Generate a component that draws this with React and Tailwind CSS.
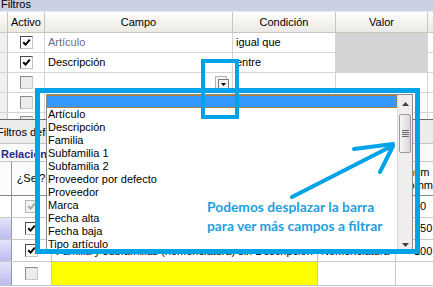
import React from "react";

const Tick = ({ color = "#000" }) => (
  <svg width="9" height="9" viewBox="0 0 9 9">
    <path d="M1.2 4.2 L3.6 6.6 L7.8 1.6" fill="none" stroke={color} strokeWidth="2" />
  </svg>
);

function CB({ state }) {
  if (state === "on")
    return (
      <div className="w-[13px] h-[13px] border border-t-[#4a4a4a] border-l-[#4a4a4a] border-r-[#c4c4c4] border-b-[#c4c4c4] bg-white flex items-center justify-center">
        <Tick />
      </div>
    );
  if (state === "dis")
    return (
      <div className="w-[13px] h-[13px] border border-[#b4b4b4] bg-[#f1f1f1] flex items-center justify-center">
        <Tick color="#a8a8a8" />
      </div>
    );
  return <div className="w-[13px] h-[13px] border border-t-[#8a8a8a] border-l-[#8a8a8a] border-r-[#c8c8c8] border-b-[#c8c8c8] bg-[#ececec]" />;
}

function URow({ cb, campo, cond, gray, extra, h = "h-[20px]" }) {
  return (
    <div className={`flex ${h} border-b border-[#d6d6d6] overflow-hidden`}>
      <div className="w-[8px] border-r border-[#c9c6bd] bg-[#f0f0f0]" />
      <div className="w-[37px] border-r border-[#d6d6d6] flex items-center justify-center">{cb}</div>
      <div className="w-[188px] border-r border-[#d6d6d6] pl-[3px] flex items-center">
        <div className="flex-1 whitespace-nowrap">{campo}</div>
        {extra}
      </div>
      <div className="w-[103px] border-r border-[#d6d6d6] pl-[3px] flex items-center whitespace-nowrap">{cond}</div>
      <div className={`w-[92px] border-r border-[#d6d6d6] ${gray ? "bg-[#d4d4d4]" : "bg-white"}`} />
      <div className="flex-1" />
    </div>
  );
}

function LRow({ cb, lav, desc, yellow, nom, val, low, h = "h-[22px]" }) {
  return (
    <div className={`flex ${h} border-b border-[#c8c8c8]`}>
      <div className={`w-[12px] border-r border-[#9a9a9a] ${lav ? "bg-gradient-to-b from-[#e4e4fa] to-[#bcbcee]" : "bg-white"}`} />
      <div className="w-[40px] border-r border-[#c8c8c8] flex items-center justify-center">{cb}</div>
      <div className={`w-[266px] border-r border-[#c8c8c8] pl-[4px] flex whitespace-nowrap overflow-hidden ${low ? "items-end pb-[2px]" : "items-center"} ${yellow ? "bg-[#ffff00]" : "bg-white"}`}>{desc}</div>
      <div className={`w-[78px] border-r border-[#c8c8c8] pl-[3px] flex whitespace-nowrap ${low ? "items-end pb-[2px]" : "items-center"}`}>{nom}</div>
      <div className={`flex-1 pl-[18px] flex whitespace-nowrap ${low ? "items-end pb-[2px]" : "items-center"}`}>{val}</div>
    </div>
  );
}

const items = [
  "Artículo",
  "Descripción",
  "Familia",
  "Subfamilia 1",
  "Subfamilia 2",
  "Proveedor por defecto",
  "Proveedor",
  "Marca",
  "Fecha alta",
  "Fecha baja",
  "Tipo artículo",
];

export default function App() {
  return (
    <div className="relative w-[433px] h-[287px] overflow-hidden bg-white text-[11px] text-black font-['Liberation_Sans',Arial,sans-serif]">
      {/* title bar */}
      <div className="h-[12px] overflow-hidden bg-[#c8d0e1] border-b border-[#e6eaf2]">
        <div className="-mt-[3px] leading-[14px] pl-[1px]">Filtros</div>
      </div>

      {/* upper header */}
      <div className="flex h-[21px] bg-gradient-to-b from-[#fdfdfc] to-[#ebe9e4] border-b border-[#c9c6bd] leading-[20px]">
        <div className="w-[8px] border-r border-[#c9c6bd]" />
        <div className="w-[37px] border-r border-[#c9c6bd] text-center">Activo</div>
        <div className="w-[188px] border-r border-[#c9c6bd] text-center">Campo</div>
        <div className="w-[103px] border-r border-[#c9c6bd] text-center">Condición</div>
        <div className="w-[92px] border-r border-[#c9c6bd] text-center">Valor</div>
        <div className="flex-1" />
      </div>

      <URow cb={<CB state="on" />} campo={<span className="text-[#6d6d8f]">Artículo</span>} cond="igual que" gray />
      <URow cb={<CB state="on" />} campo="Descripción" cond="entre" gray />
      <URow
        cb={<CB state="off" />}
        campo=""
        cond=""
        extra={
          <div className="relative w-[14px] h-[15px] mr-[3px] mt-[1px]">
            <div className="absolute left-0 top-0 w-[12px] h-[13px] border border-[#b4b4b4] bg-[#f4f4f4]" />
            <div className="absolute left-[3px] top-[3px] w-[11px] h-[12px] border border-[#7c7c7c] bg-[#f2f2f2] flex items-center justify-center">
              <svg width="5" height="3" viewBox="0 0 5 3">
                <path d="M0 0 H5 L2.5 3 Z" fill="#000" />
              </svg>
            </div>
          </div>
        }
      />
      <URow cb={<CB state="off" />} campo="" cond="" />
      <div className="flex h-[6px] overflow-hidden">
        <div className="w-[8px] border-r border-[#c9c6bd] bg-[#f0f0f0]" />
        <div className="w-[37px] border-r border-[#d6d6d6] flex justify-center pt-[3px]">
          <CB state="off" />
        </div>
        <div className="w-[188px] border-r border-[#d6d6d6]" />
        <div className="w-[103px] border-r border-[#d6d6d6]" />
        <div className="w-[92px] border-r border-[#d6d6d6]" />
      </div>

      {/* lower panel */}
      <div className="h-[1px] bg-[#6a6a6a]" />
      <div className="h-[24px] bg-[#ececec] border-b border-[#c4c4c4] leading-[24px] -ml-[3px] whitespace-nowrap">Filtros definidos</div>
      <div className="h-[18px] bg-[#fafafa] border-b border-[#c4c4c4] font-bold text-[#1c2a8c] leading-[20px] pl-[1px] whitespace-nowrap">Relaciones</div>

      {/* lower header */}
      <div className="flex h-[34px] bg-[#fbfbfb] border-b border-[#7f8f8f]">
        <div className="w-[12px] border-r border-[#9a9a9a]" />
        <div className="w-[40px] border-r border-[#c8c8c8] pl-[5px] flex items-center whitespace-nowrap">¿Sel?</div>
        <div className="w-[266px] border-r border-[#c8c8c8]" />
        <div className="w-[78px] border-r border-[#c8c8c8]" />
        <div className="flex-1 pl-[18px] flex flex-col justify-center leading-[13px] whitespace-nowrap">
          <span>Enum</span>
          <span>Comm</span>
        </div>
      </div>
      <LRow cb={<CB state="dis" />} desc="Artículos" nom="Artículo" val="10" />
      <LRow cb={<CB state="on" />} lav desc="Familias" nom="Familia" val="150" />
      <LRow cb={<CB state="on" />} lav low desc="Familia y subfamilias (nomenclatura) sin Descripción" nom="Nomenclatura" val="100" />
      <LRow cb={<CB state="off" />} lav yellow desc="" nom="" val="" h="h-[24px]" />

      {/* dropdown list overlay */}
      <div className="absolute left-[46px] top-[94px] w-[367px] h-[160px] border border-[#8c8c8c] bg-white flex overflow-hidden">
        <div className="flex-1 flex flex-col">
          <div className="h-[13px] bg-[#3399ff] border border-dotted border-[#b8733a]" />
          {items.map((t) => (
            <div key={t} className="h-[13px] leading-[13px] pl-[1px] whitespace-nowrap">
              {t}
            </div>
          ))}
        </div>
        <div className="w-[15px] bg-[#eeeeee] border-l border-[#dadada] flex flex-col">
          <div className="h-[17px] flex items-center justify-center">
            <svg width="7" height="4" viewBox="0 0 7 4">
              <path d="M0 4 L3.5 0 L7 4 Z" fill="#404040" />
            </svg>
          </div>
          <div className="h-[39px] mt-[2px] mx-[1px] rounded-[2px] border border-[#9a9a9a] bg-gradient-to-r from-[#f6f6f6] to-[#d8d8d8] flex flex-col items-center justify-center gap-[1px]">
            <div className="w-[7px] h-[1px] bg-[#6a6a6a]" />
            <div className="w-[7px] h-[1px] bg-[#6a6a6a]" />
            <div className="w-[7px] h-[1px] bg-[#6a6a6a]" />
            <div className="w-[7px] h-[1px] bg-[#6a6a6a]" />
          </div>
          <div className="flex-1" />
          <div className="h-[17px] flex items-center justify-center">
            <svg width="7" height="4" viewBox="0 0 7 4">
              <path d="M0 0 L7 0 L3.5 4 Z" fill="#404040" />
            </svg>
          </div>
        </div>
      </div>

      {/* annotation rectangles */}
      <div className="absolute left-[35px] top-[88px] w-[385px] h-[166px] border-[5px] border-[#00a2e8]" />
      <div className="absolute left-[201px] top-[59px] w-[38px] h-[60px] border-[4px] border-[#00a2e8]" />

      {/* arrow */}
      <svg className="absolute left-0 top-0" width="433" height="287" viewBox="0 0 433 287">
        <g stroke="#00a2e8" strokeWidth="4" strokeLinecap="round" fill="none">
          <path d="M292 197 L392 146" />
          <path d="M354 149 L393 144" />
          <path d="M380 172 L393 146" />
        </g>
      </svg>

      {/* annotation text */}
      <div className="absolute left-[207px] top-[197px] font-['Lato',sans-serif] font-bold text-[13.8px] leading-[19px] text-[#1f9fe0] whitespace-nowrap">
        <div>Podemos desplazar la barra</div>
        <div>para ver más campos a filtrar</div>
      </div>
    </div>
  );
}
